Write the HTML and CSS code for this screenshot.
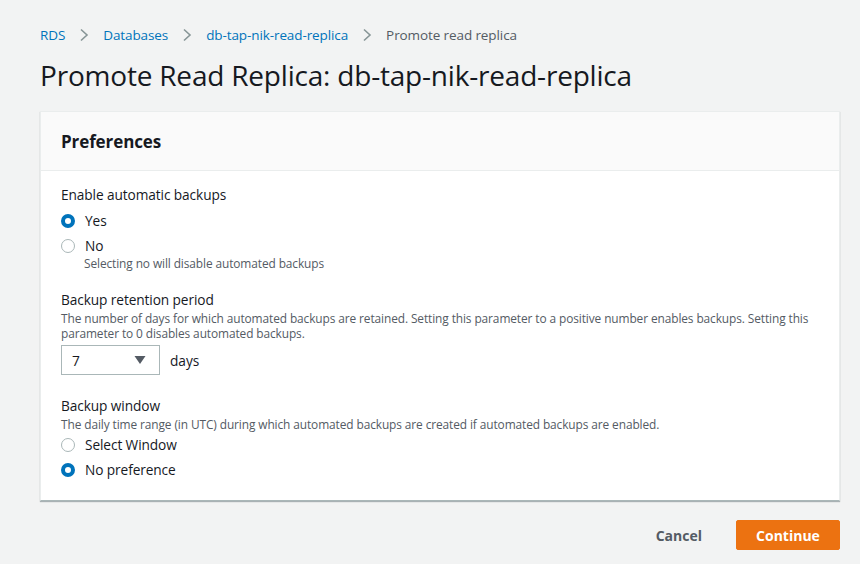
FILE: index.html
```html
<!DOCTYPE html>
<html>
<head>
<meta charset="utf-8">
<link rel="stylesheet" href="styles.css">
</head>
<body>
<div class="page">
  <nav class="crumbs">
    <a class="crumb-link">RDS</a>
    <svg class="chev" width="10" height="14" viewBox="0 0 10 14"><path d="M2 1.5 L8 7 L2 12.5" fill="none" stroke="#879596" stroke-width="1.6"/></svg>
    <a class="crumb-link">Databases</a>
    <svg class="chev" width="10" height="14" viewBox="0 0 10 14"><path d="M2 1.5 L8 7 L2 12.5" fill="none" stroke="#879596" stroke-width="1.6"/></svg>
    <a class="crumb-link">db-tap-nik-read-replica</a>
    <svg class="chev" width="10" height="14" viewBox="0 0 10 14"><path d="M2 1.5 L8 7 L2 12.5" fill="none" stroke="#879596" stroke-width="1.6"/></svg>
    <span class="crumb-current">Promote read replica</span>
  </nav>
  <h1 class="title">Promote Read Replica: db-tap-nik-read-replica</h1>
  <section class="card">
    <header class="card-head"><h2>Preferences</h2></header>
    <div class="card-body">
      <div class="field first">
        <div class="label spaced">Enable automatic backups</div>
        <div class="radio-row"><span class="radio checked"></span><span>Yes</span></div>
        <div class="radio-row"><span class="radio"></span><span>No</span></div>
        <div class="hint indent">Selecting no will disable automated backups</div>
      </div>
      <div class="field">
        <div class="label">Backup retention period</div>
        <div class="desc">The number of days for which automated backups are retained. Setting this parameter to a positive number enables backups. Setting this parameter to 0 disables automated backups.</div>
        <div class="select-row">
          <div class="select"><span>7</span><svg width="12" height="10" viewBox="0 0 12 10"><path d="M0.5 1 L11.5 1 L6 9 Z" fill="#545b64"/></svg></div>
          <span class="unit">days</span>
        </div>
      </div>
      <div class="field last">
        <div class="label">Backup window</div>
        <div class="desc">The daily time range (in UTC) during which automated backups are created if automated backups are enabled.</div>
        <div class="radio-row"><span class="radio"></span><span>Select Window</span></div>
        <div class="radio-row"><span class="radio checked"></span><span>No preference</span></div>
      </div>
    </div>
  </section>
  <div class="actions">
    <button class="btn-link">Cancel</button>
    <button class="btn-primary">Continue</button>
  </div>
</div>
</body>
</html>
```
FILE: styles.css
```css
* { box-sizing: border-box; }
html, body { margin: 0; padding: 0; }
body {
  background: #f2f3f3;
  font-family: "Open Sans", "Noto Sans", sans-serif;
  color: #16191f;
  width: 860px;
  height: 564px;
  overflow: hidden;
}
.page { padding: 24px 20px 0 40px; }
.crumbs {
  display: flex;
  align-items: center;
  gap: 14px;
  font-size: 13.5px;
  height: 22px;
  letter-spacing: -0.1px;
}
.crumb-link { color: #0073bb; }
.crumb-current { color: #545b64; }
.chev { display: block; }
.title {
  margin: 10px 0 0 0;
  font-size: 28px;
  font-weight: 400;
  line-height: 38px;
  letter-spacing: -0.2px;
}
.card {
  margin-top: 17px;
  background: #fff;
  border: 1px solid #eaeded;
  border-bottom: 1px solid #aab7b8;
  box-shadow: 0 1px 1px rgba(0,28,36,0.3);
}
.card-head {
  background: #fafafa;
  border-bottom: 1px solid #eaeded;
  height: 59px;
  padding: 0 20px;
  display: flex;
  align-items: center;
}
.card-head h2 {
  margin: 0;
  font-size: 17px;
  font-weight: 700;
  letter-spacing: -0.1px;
}
.card-body { padding: 13px 20px 18px 20px; }
.field { margin-bottom: 20px; }
.field.first { margin-bottom: 18px; }
.field.last { margin-bottom: 0; }
.label { font-size: 13.7px; line-height: 22px; letter-spacing: -0.1px; }
.label.spaced { margin-bottom: 2px; }
.desc { font-size: 11.9px; color: #545b64; line-height: 15px; letter-spacing: -0.1px; }
.hint { font-size: 11.9px; color: #545b64; line-height: 15px; letter-spacing: -0.1px; margin-top: -2px; }
.indent { padding-left: 23px; }
.radio-row {
  display: flex;
  align-items: center;
  gap: 10px;
  font-size: 13.7px;
  height: 25px;
  letter-spacing: -0.1px;
}
.radio {
  width: 14px; height: 14px;
  border-radius: 50%;
  border: 1px solid #aab7b8;
  background: #fff;
  flex: none;
}
.radio.checked {
  border: 4px solid #0073bb;
}
.select-row {
  display: flex;
  align-items: center;
  gap: 10px;
  margin-top: 4px;
}
.select {
  width: 99px; height: 30px;
  border: 1px solid #aab7b8;
  background: #fff;
  display: flex;
  align-items: center;
  justify-content: space-between;
  padding: 0 13px 0 10px;
  font-size: 13.7px;
}
.unit { font-size: 13.7px; }
.actions {
  display: flex;
  justify-content: flex-end;
  align-items: center;
  gap: 34px;
  margin-top: 19px;
}
.btn-link {
  background: none; border: none;
  font-family: inherit;
  font-size: 14px; font-weight: 700;
  color: #545b64;
  padding: 0;
}
.btn-primary {
  background: #ec7211;
  border: 1px solid #ec7211;
  border-radius: 2px;
  color: #fff;
  font-family: inherit;
  font-size: 14px; font-weight: 700;
  width: 104px; height: 30px;
  padding: 0;
}
```
